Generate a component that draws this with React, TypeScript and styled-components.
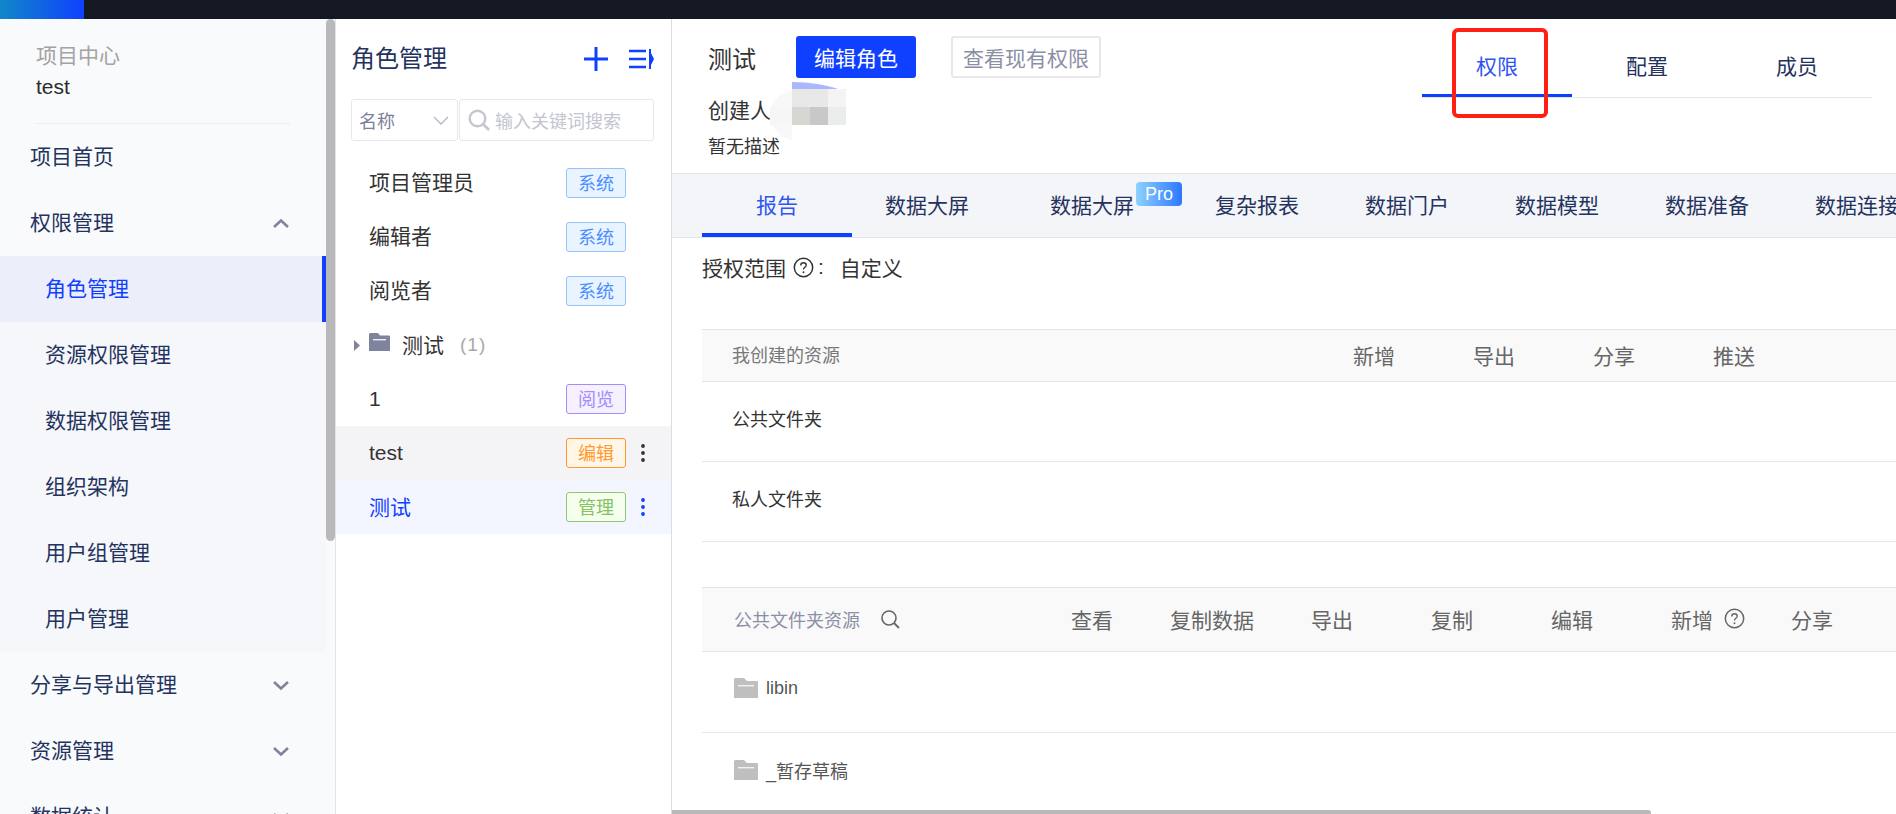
import React from "react"
import styled, { createGlobalStyle } from "styled-components"

const BLUE = "#1040ff"
const NAVY = "#24335e"

const GlobalStyle = createGlobalStyle`
  html, body {
    margin: 0;
    padding: 0;
    background: #fff;
  }
  * {
    box-sizing: border-box;
  }
  body {
    font-family: "Liberation Sans", "Noto Sans CJK SC", sans-serif;
  }
`

const tagColors = {
  system: { bg: "#e8f4ff", border: "#97c2fb", text: "#4c8dff" },
  view: { bg: "#f6f0ff", border: "#a28dfb", text: "#a28dfb" },
  edit: { bg: "#fff6e8", border: "#ff9a2e", text: "#ff9a2e" },
  admin: { bg: "#f6ffed", border: "#8dc972", text: "#82c263" },
}

type TagKind = keyof typeof tagColors

const roles: { name: string; tag: TagKind; label: string; lift: number; state?: "hover" | "active" }[] = [
  { name: "1", tag: "view", label: "阅览", lift: 0 },
  { name: "test", tag: "edit", label: "编辑", lift: 0, state: "hover" },
  { name: "测试", tag: "admin", label: "管理", lift: 2, state: "active" },
]

function Chevron({ up }: { up?: boolean }) {
  return (
    <svg width="18" height="11" viewBox="0 0 18 11" fill="none">
      <path
        d={up ? "M2 9l7-6.5L16 9" : "M2 2l7 6.5L16 2"}
        stroke="#7f849c"
        strokeWidth="2.6"
      />
    </svg>
  )
}

function Dots({ color }: { color: string }) {
  return (
    <svg width="6" height="20" viewBox="0 0 6 20">
      <circle cx="3" cy="3" r="1.9" fill={color} />
      <circle cx="3" cy="10" r="1.9" fill={color} />
      <circle cx="3" cy="17" r="1.9" fill={color} />
    </svg>
  )
}

function HelpIcon({ color }: { color: string }) {
  return (
    <svg width="21" height="21" viewBox="0 0 21 21" fill="none">
      <circle cx="10.5" cy="10.5" r="9.2" stroke={color} strokeWidth="1.5" />
      <path
        d="M7.8 8.4c0-1.6 1.2-2.6 2.7-2.6s2.7 1 2.7 2.4c0 2.1-2.7 2.1-2.7 4.3"
        stroke={color}
        strokeWidth="1.4"
      />
      <circle cx="10.5" cy="15.2" r="0.95" fill={color} />
    </svg>
  )
}

function GreyFolder() {
  return (
    <svg width="24" height="20" viewBox="0 0 24 20">
      <path d="M0 1.5C0 .7.7 0 1.5 0H10l3 3h10c.6 0 1 .4 1 1v16H0z" fill="#bfbfbf" />
      <rect x="4" y="7" width="16" height="1.4" fill="#f2f2f2" />
    </svg>
  )
}

function BlurredName() {
  return (
    <svg width="76" height="58" viewBox="0 0 76 58">
      <path d="M22 7V0C40 0 56 3 68 7z" fill="#a9b8fb" />
      <path d="M22 58C8 56 0 44 0 30 0 22 8 12 22 8z" fill="#f8f8fa" />
      <rect x="22" y="7" width="18" height="18" fill="#e7e7e7" />
      <rect x="40" y="7" width="18" height="18" fill="#e8e8e8" />
      <rect x="58" y="7" width="18" height="18" fill="#f4f4f4" />
      <rect x="0" y="25" width="22" height="18" fill="#f6f6f7" />
      <rect x="22" y="25" width="18" height="18" fill="#d6d6d3" />
      <rect x="40" y="25" width="18" height="18" fill="#c8c8ca" />
      <rect x="58" y="25" width="18" height="18" fill="#ebecec" />
    </svg>
  )
}

export default function App() {
  return (
    <Page>
      <GlobalStyle />
      <TopBar>
        <Logo />
      </TopBar>
      <Body>
        <Sidebar>
          <Menu>
            <ProjectHead>
              <ProjectLabel>项目中心</ProjectLabel>
              <ProjectName>test</ProjectName>
            </ProjectHead>
            <Divider />
            <NavRow>项目首页</NavRow>
            <NavRow>
              权限管理
              <Chevron up />
            </NavRow>
            <SubMenu>
              <SubRow $active>角色管理</SubRow>
              <SubRow>资源权限管理</SubRow>
              <SubRow>数据权限管理</SubRow>
              <SubRow>组织架构</SubRow>
              <SubRow>用户组管理</SubRow>
              <SubRow>用户管理</SubRow>
            </SubMenu>
            <NavRow>
              分享与导出管理
              <Chevron />
            </NavRow>
            <NavRow>
              资源管理
              <Chevron />
            </NavRow>
            <NavRow>
              数据统计
              <Chevron />
            </NavRow>
          </Menu>
          <ScrollTrack>
            <ScrollThumb />
          </ScrollTrack>
        </Sidebar>

        <RolePanel>
          <PanelHead>
            <PanelTitle>角色管理</PanelTitle>
            <PanelIcons>
              <svg width="24" height="24" viewBox="0 0 24 24">
                <path d="M0 12h24M12 0v24" stroke={BLUE} strokeWidth="3" />
              </svg>
              <svg width="25" height="20" viewBox="0 0 25 20">
                <path d="M0 2h17M0 10h17M0 18h17" stroke={BLUE} strokeWidth="2.6" />
                <path d="M20 0h2v4l3 6-3 6v4h-2z" fill={BLUE} />
              </svg>
            </PanelIcons>
          </PanelHead>
          <FilterRow>
            <FilterSelect>
              名称
              <svg width="16" height="9" viewBox="0 0 16 9" fill="none">
                <path d="M1 1l7 7 7-7" stroke="#b4b7c4" strokeWidth="1.3" />
              </svg>
            </FilterSelect>
            <FilterSearch>
              <svg width="22" height="22" viewBox="0 0 22 22" fill="none">
                <circle cx="9.5" cy="9.5" r="7.8" stroke="#c3c5d0" strokeWidth="2.4" />
                <path d="M15 15l6 6" stroke="#c3c5d0" strokeWidth="2.6" />
              </svg>
              输入关键词搜索
            </FilterSearch>
          </FilterRow>
          <RoleList>
            <RoleRow>
              <RoleName $lift={4}>项目管理员</RoleName>
              <Tag $kind="system">系统</Tag>
            </RoleRow>
            <RoleRow>
              <RoleName $lift={4}>编辑者</RoleName>
              <Tag $kind="system">系统</Tag>
            </RoleRow>
            <RoleRow>
              <RoleName $lift={4}>阅览者</RoleName>
              <Tag $kind="system">系统</Tag>
            </RoleRow>
            <FolderRow>
              <svg width="6" height="11" viewBox="0 0 6 11">
                <path d="M0 0l6 5.5L0 11z" fill="#7f849c" />
              </svg>
              <svg width="21" height="18" viewBox="0 0 21 18">
                <path d="M0 1.5C0 .7.7 0 1.5 0H9l2 2.5h9c.6 0 1 .4 1 1V18H0z" fill="#7f849c" />
                <rect x="4" y="6" width="13" height="1.4" fill="#eceef4" />
              </svg>
              <FolderName>测试</FolderName>
              <FolderCount>(1)</FolderCount>
            </FolderRow>
            {roles.map(role => (
              <RoleRow key={role.name} $state={role.state}>
                <RoleName $lift={role.lift}>{role.name}</RoleName>
                <Tag $kind={role.tag}>{role.label}</Tag>
                {role.state && (
                  <DotsSlot>
                    <Dots color={role.state === "active" ? BLUE : "#333"} />
                  </DotsSlot>
                )}
              </RoleRow>
            ))}
          </RoleList>
        </RolePanel>

        <Main>
          <MainScroll>
            <Header>
              <Info>
                <TitleRow>
                  <RoleTitle>测试</RoleTitle>
                  <PrimaryButton>编辑角色</PrimaryButton>
                  <GhostButton>查看现有权限</GhostButton>
                </TitleRow>
                <CreatorRow>
                  创建人
                  <BlurSlot>
                    <BlurredName />
                  </BlurSlot>
                </CreatorRow>
                <Description>暂无描述</Description>
              </Info>
              <RoleTabs>
                <RoleTab $active>
                  权限
                  <RedMark />
                </RoleTab>
                <RoleTab>配置</RoleTab>
                <RoleTab>成员</RoleTab>
              </RoleTabs>
            </Header>

            <ResourceTabs>
              <ResourceTab $active>报告</ResourceTab>
              <ResourceTab>数据大屏</ResourceTab>
              <ResourceTab $wide>
                数据大屏
                <ProBadge>Pro</ProBadge>
              </ResourceTab>
              <ResourceTab>复杂报表</ResourceTab>
              <ResourceTab>数据门户</ResourceTab>
              <ResourceTab>数据模型</ResourceTab>
              <ResourceTab>数据准备</ResourceTab>
              <ResourceTab>数据连接</ResourceTab>
            </ResourceTabs>

            <Content>
              <ScopeRow>
                授权范围
                <HelpIcon color="#333" />
                <ScopeColon>:</ScopeColon>
                <ScopeValue>自定义</ScopeValue>
              </ScopeRow>

              <Table>
                <HeadRow $height={52}>
                  <HeadName $width={612} $inset={30} $lift={4}>
                    我创建的资源
                  </HeadName>
                  <HeadCell>新增</HeadCell>
                  <HeadCell>导出</HeadCell>
                  <HeadCell>分享</HeadCell>
                  <HeadCell>推送</HeadCell>
                </HeadRow>
                <BodyRow $height={80}>
                  <RowName>公共文件夹</RowName>
                </BodyRow>
                <BodyRow $height={80}>
                  <RowName>私人文件夹</RowName>
                </BodyRow>
              </Table>

              <Table $gap={45}>
                <HeadRow $height={64}>
                  <HeadName $width={330} $inset={32} $lift={2} $tint>
                    公共文件夹资源
                    <svg width="20" height="20" viewBox="0 0 20 20" fill="none">
                      <circle cx="9" cy="9" r="7" stroke="#666" strokeWidth="1.6" />
                      <path d="M14 14l5 5" stroke="#666" strokeWidth="1.8" />
                    </svg>
                  </HeadName>
                  <HeadCell>查看</HeadCell>
                  <HeadCell>复制数据</HeadCell>
                  <HeadCell>导出</HeadCell>
                  <HeadCell>复制</HeadCell>
                  <HeadCell>编辑</HeadCell>
                  <HeadCell $start>
                    新增
                    <HelpIcon color="#666" />
                  </HeadCell>
                  <HeadCell>分享</HeadCell>
                </HeadRow>
                <BodyRow $height={81}>
                  <FolderCell>
                    <GreyFolder />
                    libin
                  </FolderCell>
                </BodyRow>
                <BodyRow $height={81} $plain>
                  <FolderCell>
                    <GreyFolder />
                    _暂存草稿
                  </FolderCell>
                </BodyRow>
              </Table>
            </Content>
          </MainScroll>
          <HScrollTrack>
            <HScrollThumb />
          </HScrollTrack>
        </Main>
      </Body>
    </Page>
  )
}

const Page = styled.div`
  width: 1896px;
  height: 814px;
  display: flex;
  flex-direction: column;
  overflow: hidden;
`

const TopBar = styled.div`
  height: 19px;
  flex: none;
  background: #141822;
`

const Logo = styled.div`
  width: 84px;
  height: 100%;
  background: linear-gradient(90deg, #1088c8, ${BLUE});
`

const Body = styled.div`
  flex: 1;
  min-height: 0;
  display: flex;
`

const Sidebar = styled.aside`
  width: 336px;
  flex: none;
  display: flex;
  overflow: hidden;
  background: #f9fafc;
  border-right: 1px solid #e2e3e8;
`

const Menu = styled.nav`
  width: 326px;
  flex: none;
`

const ProjectHead = styled.div`
  padding: 24px 0 0 36px;
  line-height: 26px;
`

const ProjectLabel = styled.div`
  font-size: 21px;
  color: #a3a3a3;
`

const ProjectName = styled.div`
  margin-top: 5px;
  font-size: 21px;
  color: #2b2b2b;
`

const Divider = styled.div`
  height: 1px;
  margin: 23px 36px 0;
  background: #ecedf1;
`

const NavRow = styled.div`
  height: 66px;
  padding: 0 36px 5px 30px;
  display: flex;
  align-items: center;
  justify-content: space-between;
  font-size: 21px;
  color: ${NAVY};
  svg {
    margin-top: 5px;
  }
`

const SubMenu = styled.div`
  background: #f6f7fa;
`

const SubRow = styled.div<{ $active?: boolean }>`
  height: 66px;
  padding: 0 0 5px 45px;
  display: flex;
  align-items: center;
  font-size: 21px;
  color: ${props => (props.$active ? BLUE : NAVY)};
  background: ${props => (props.$active ? "#eceff9" : "transparent")};
  border-right: 4px solid ${props => (props.$active ? BLUE : "transparent")};
`

const ScrollTrack = styled.div`
  width: 9px;
  flex: none;
`

const ScrollThumb = styled.div`
  height: 522px;
  background: #b9b9bb;
  border-radius: 5px;
`

const RolePanel = styled.section`
  width: 336px;
  flex: none;
  background: #fff;
  border-right: 1px solid #dcdde1;
`

const PanelHead = styled.div`
  height: 80px;
  padding: 0 17px 0 15px;
  display: flex;
  align-items: center;
  justify-content: space-between;
`

const PanelTitle = styled.h2`
  margin: 0 0 5px;
  font-size: 24px;
  font-weight: 400;
  color: ${NAVY};
`

const PanelIcons = styled.div`
  display: flex;
  align-items: center;
  gap: 21px;
`

const FilterRow = styled.div`
  height: 42px;
  margin-left: 15px;
  display: flex;
  gap: 1px;
`

const FilterSelect = styled.div`
  width: 107px;
  padding: 0 8px 0 7px;
  display: flex;
  align-items: center;
  justify-content: space-between;
  font-size: 18px;
  color: #7c819b;
  border: 1px solid #e7e8ef;
  border-radius: 3px;
`

const FilterSearch = styled.div`
  width: 195px;
  padding-left: 8px;
  display: flex;
  align-items: center;
  gap: 5px;
  font-size: 18px;
  color: #c3c5d0;
  border: 1px solid #e7e8ef;
  border-radius: 3px;
`

const RoleList = styled.div`
  margin-top: 15px;
`

const RoleRow = styled.div<{ $state?: "hover" | "active" }>`
  height: 54px;
  padding-left: 33px;
  display: flex;
  align-items: center;
  color: ${props => (props.$state === "active" ? BLUE : "#333")};
  background: ${props =>
    props.$state === "active"
      ? "#f4f6ff"
      : props.$state === "hover"
        ? "#f4f4f6"
        : "transparent"};
`

const RoleName = styled.div<{ $lift: number }>`
  width: 197px;
  margin-bottom: ${props => props.$lift}px;
  font-size: 21px;
`

const Tag = styled.div<{ $kind: TagKind }>`
  width: 60px;
  height: 30px;
  padding-bottom: 2px;
  display: flex;
  align-items: center;
  justify-content: center;
  font-size: 18px;
  color: ${props => tagColors[props.$kind].text};
  background: ${props => tagColors[props.$kind].bg};
  border: 1px solid ${props => tagColors[props.$kind].border};
  border-radius: 3px;
`

const DotsSlot = styled.div`
  margin-left: 14px;
  display: flex;
`

const FolderRow = styled.div`
  height: 54px;
  padding-left: 18px;
  display: flex;
  align-items: center;
  color: #333;
  svg:nth-child(2) {
    margin: -6px 0 0 9px;
  }
`

const FolderName = styled.span`
  margin: 0 0 2px 12px;
  font-size: 21px;
`

const FolderCount = styled.span`
  margin-left: 16px;
  font-size: 19px;
  color: #a8a8a8;
  letter-spacing: 1px;
`

const Main = styled.main`
  flex: 1;
  min-width: 0;
  display: flex;
  flex-direction: column;
  background: #fff;
`

const MainScroll = styled.div`
  flex: 1;
  min-height: 0;
  overflow: hidden;
`

const HScrollTrack = styled.div`
  height: 4px;
  flex: none;
`

const HScrollThumb = styled.div`
  width: 979px;
  height: 100%;
  background: #b8b8b8;
  border-top-right-radius: 3px;
`

const Header = styled.header`
  height: 154px;
  padding: 0 24px 0 36px;
  display: flex;
  justify-content: space-between;
`

const Info = styled.div`
  padding-top: 17px;
  color: #333;
`

const TitleRow = styled.div`
  display: flex;
  align-items: center;
`

const RoleTitle = styled.div`
  width: 88px;
  font-size: 24px;
`

const PrimaryButton = styled.div`
  width: 120px;
  height: 42px;
  display: flex;
  align-items: center;
  justify-content: center;
  font-size: 21px;
  color: #fff;
  background: ${BLUE};
  border-radius: 3px;
`

const GhostButton = styled.div`
  width: 150px;
  height: 42px;
  margin-left: 35px;
  display: flex;
  align-items: center;
  justify-content: center;
  font-size: 21px;
  color: #8b8fa6;
  border: 2px solid #e8e8e8;
  border-radius: 3px;
`

const CreatorRow = styled.div`
  height: 26px;
  margin-top: 18px;
  display: flex;
  align-items: center;
  font-size: 21px;
`

const BlurSlot = styled.div`
  height: 26px;
  margin-left: -1px;
  display: flex;
  align-items: flex-start;
  svg {
    margin-top: -14px;
    flex: none;
  }
`

const Description = styled.div`
  margin-top: 12px;
  font-size: 18px;
  line-height: 26px;
`

const RoleTabs = styled.div`
  height: 58px;
  margin-top: 21px;
  display: flex;
  border-bottom: 1px solid #e6e6e6;
`

const RoleTab = styled.div<{ $active?: boolean }>`
  position: relative;
  width: 150px;
  height: 57px;
  padding-bottom: 5px;
  display: flex;
  align-items: center;
  justify-content: center;
  font-size: 21px;
  color: ${props => (props.$active ? "#2f55f0" : NAVY)};
  border-bottom: 3px solid ${props => (props.$active ? BLUE : "transparent")};
`

const RedMark = styled.div`
  position: absolute;
  left: 30px;
  top: -12px;
  width: 96px;
  height: 90px;
  border: 4px solid #ff2015;
  border-radius: 6px;
`

const ResourceTabs = styled.div`
  height: 65px;
  padding-left: 30px;
  display: flex;
  overflow: hidden;
  background: #f4f5f9;
  border-top: 1px solid #e4e5ea;
  border-bottom: 1px solid #e4e5ea;
`

const ResourceTab = styled.div<{ $active?: boolean; $wide?: boolean }>`
  position: relative;
  width: ${props => (props.$wide ? "180px" : "150px")};
  flex: none;
  padding-top: 1px;
  display: flex;
  align-items: center;
  justify-content: center;
  font-size: 21px;
  color: ${props => (props.$active ? "#2f55f0" : NAVY)};
  border-bottom: 4px solid ${props => (props.$active ? BLUE : "transparent")};
`

const ProBadge = styled.span`
  position: absolute;
  right: 0;
  top: 8px;
  width: 46px;
  height: 24px;
  display: flex;
  align-items: center;
  justify-content: center;
  font-size: 18px;
  color: #fff;
  background: linear-gradient(90deg, #8ed2ff, #2c78ff);
  border-radius: 4px;
`

const Content = styled.div`
  padding: 17px 0 0 30px;
`

const ScopeRow = styled.div`
  height: 26px;
  padding-bottom: 2px;
  display: flex;
  align-items: center;
  font-size: 21px;
  color: #333;
  svg {
    margin-left: 7px;
  }
`

const ScopeColon = styled.span`
  margin-left: 4px;
`

const ScopeValue = styled.span`
  margin-left: 16px;
`

const Table = styled.div<{ $gap?: number }>`
  margin-top: ${props => props.$gap ?? 48}px;
  border-top: 1px solid #e4e4e4;
`

const HeadRow = styled.div<{ $height: number }>`
  height: ${props => props.$height}px;
  display: flex;
  background: #f9f9f9;
  border-bottom: 1px solid #e4e4e4;
`

const HeadName = styled.div<{ $width: number; $inset: number; $lift: number; $tint?: boolean }>`
  width: ${props => props.$width}px;
  flex: none;
  padding: 0 0 ${props => props.$lift}px ${props => props.$inset}px;
  display: flex;
  align-items: center;
  gap: 20px;
  font-size: 18px;
  color: ${props => (props.$tint ? "#8b8fa6" : "#777")};
`

const HeadCell = styled.div<{ $start?: boolean }>`
  width: 120px;
  flex: none;
  padding: 0 0 2px ${props => (props.$start ? "39px" : "0")};
  display: flex;
  align-items: center;
  justify-content: ${props => (props.$start ? "flex-start" : "center")};
  gap: 11px;
  font-size: 21px;
  color: #666;
`

const BodyRow = styled.div<{ $height: number; $plain?: boolean }>`
  height: ${props => props.$height}px;
  padding-bottom: 8px;
  display: flex;
  align-items: center;
  border-bottom: ${props => (props.$plain ? "none" : "1px solid #e8e8e8")};
`

const RowName = styled.div`
  padding-left: 30px;
  font-size: 18px;
  color: #333;
`

const FolderCell = styled.div`
  padding-left: 32px;
  display: flex;
  align-items: center;
  gap: 8px;
  font-size: 18px;
  color: #555;
`
